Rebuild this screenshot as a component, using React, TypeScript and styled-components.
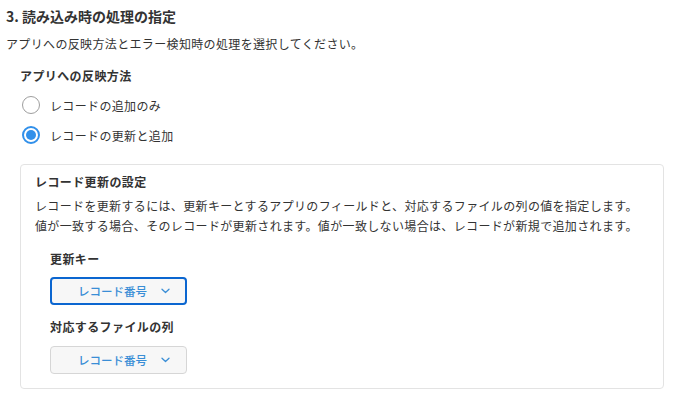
import React from "react";
import styled, { createGlobalStyle } from "styled-components";

const GlobalStyle = createGlobalStyle`
  html, body { margin: 0; padding: 0; background: #fff; }
  body {
    font-family: "Noto Sans CJK JP", "Noto Sans", sans-serif;
    color: #333;
  }
`;

const Page = styled.div`
  padding: 6px 0 0 6px;
  width: 691px;
  box-sizing: border-box;
`;

const Title = styled.h2`
  margin: 0;
  font-size: 14px;
  line-height: 20px;
  font-weight: 700;
  color: #333;
`;

const Description = styled.p`
  margin: 8px 0 0 0;
  font-size: 12px;
  line-height: 20px;
  letter-spacing: 0.35px;
  color: #333;
`;

const Section = styled.div`
  margin-top: 12px;
  padding-left: 14px;
  display: flex;
  flex-direction: column;
`;

const Label = styled.div<{ $gap?: number }>`
  margin-top: ${(p) => p.$gap ?? 0}px;
  font-size: 12px;
  line-height: 20px;
  font-weight: 700;
  letter-spacing: 0.4px;
  color: #333;
`;

const RadioRow = styled.label<{ $gap: number }>`
  margin-top: ${(p) => p.$gap}px;
  display: flex;
  align-items: center;
  gap: 10px;
  height: 24px;
  padding-left: 2px;
  font-size: 12px;
  letter-spacing: 0.35px;
  color: #333;
  cursor: pointer;
`;

const RadioCircle = styled.span<{ $checked: boolean }>`
  width: 18px;
  height: 18px;
  box-sizing: border-box;
  border-radius: 50%;
  border: ${(p) => (p.$checked ? "2px solid #3190ea" : "1px solid #9e9e9e")};
  background: #fff;
  display: flex;
  align-items: center;
  justify-content: center;
  &::after {
    content: "";
    display: ${(p) => (p.$checked ? "block" : "none")};
    width: 10px;
    height: 10px;
    border-radius: 50%;
    background: #3190ea;
  }
`;

const SettingsBox = styled.div`
  margin-top: 17px;
  width: 644px;
  box-sizing: border-box;
  border: 1px solid #e3e3e3;
  border-radius: 4px;
  padding: 7px 14px 14px 14px;
`;

const BoxText = styled.p`
  margin: 4px 0 0 0;
  font-size: 12px;
  line-height: 20px;
  letter-spacing: 0.35px;
  color: #333;
`;

const Fields = styled.div`
  padding-left: 15px;
  display: flex;
  flex-direction: column;
  align-items: flex-start;
`;

const Dropdown = styled.div<{ $focused?: boolean; $gap: number }>`
  margin-top: ${(p) => p.$gap}px;
  width: 137px;
  height: 28px;
  box-sizing: border-box;
  display: flex;
  align-items: center;
  padding: 0 ${(p) => (p.$focused ? 15 : 16)}px 0 ${(p) => (p.$focused ? 26 : 27)}px;
  background: #f7f7f7;
  border: ${(p) => (p.$focused ? "2px solid #0b66d0" : "1px solid #d6d6d6")};
  border-radius: 4px;
  font-size: 11.5px;
  font-weight: 500;
  letter-spacing: 0;
  color: #3a8ed6;
  cursor: pointer;
`;

const DropdownText = styled.span`
  flex: 1;
`;

const ChevronWrap = styled.span`
  display: flex;
  align-items: center;
`;

const Chevron = () => (
  <ChevronWrap>
    <svg width="9" height="6" viewBox="0 0 9 6" fill="none">
      <path d="M1 1.2l3.5 3.3 3.5-3.3" stroke="#3a8ed6" strokeWidth="1.3" strokeLinecap="round" strokeLinejoin="round" />
    </svg>
  </ChevronWrap>
);

export default function App() {
  return (
    <Page>
      <GlobalStyle />
      <Title>3. 読み込み時の処理の指定</Title>
      <Description>アプリへの反映方法とエラー検知時の処理を選択してください。</Description>
      <Section>
        <Label>アプリへの反映方法</Label>
        <RadioRow $gap={7}>
          <RadioCircle $checked={false} />
          レコードの追加のみ
        </RadioRow>
        <RadioRow $gap={6}>
          <RadioCircle $checked={true} />
          レコードの更新と追加
        </RadioRow>
        <SettingsBox>
          <Label>レコード更新の設定</Label>
          <BoxText>
            レコードを更新するには、更新キーとするアプリのフィールドと、対応するファイルの列の値を指定します。
            <br />
            値が一致する場合、そのレコードが更新されます。値が一致しない場合は、レコードが新規で追加されます。
          </BoxText>
          <Fields>
            <Label $gap={13}>更新キー</Label>
            <Dropdown $focused $gap={8} role="button">
              <DropdownText>レコード番号</DropdownText>
              <Chevron />
            </Dropdown>
            <Label $gap={12}>対応するファイルの列</Label>
            <Dropdown $gap={9} role="button">
              <DropdownText>レコード番号</DropdownText>
              <Chevron />
            </Dropdown>
          </Fields>
        </SettingsBox>
      </Section>
    </Page>
  );
}
